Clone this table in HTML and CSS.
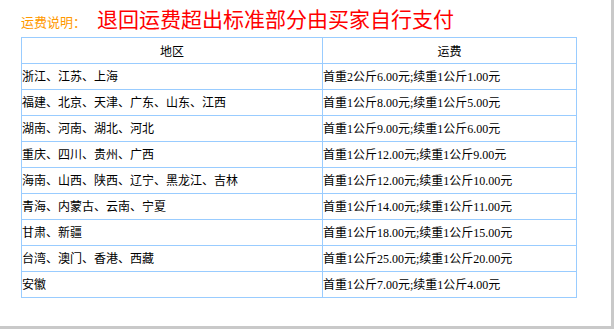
FILE: index.html
```html
<!DOCTYPE html>
<html lang="zh-CN">
<head>
<meta charset="utf-8">
<title>运费说明</title>
<link rel="stylesheet" href="styles.css">
</head>
<body>
<div class="page">
  <div class="title">
    <span class="label">运费说明：</span>
    <span class="notice">退回运费超出标准部分由买家自行支付</span>
  </div>
  <table class="fees">
    <thead>
      <tr><th class="col-area">地区</th><th class="col-fee">运费</th></tr>
    </thead>
    <tbody>
      <tr><td>浙江、江苏、上海</td><td>首重2公斤6.00元;续重1公斤1.00元</td></tr>
      <tr><td>福建、北京、天津、广东、山东、江西</td><td>首重1公斤8.00元;续重1公斤5.00元</td></tr>
      <tr><td>湖南、河南、湖北、河北</td><td>首重1公斤9.00元;续重1公斤6.00元</td></tr>
      <tr><td>重庆、四川、贵州、广西</td><td>首重1公斤12.00元;续重1公斤9.00元</td></tr>
      <tr><td>海南、山西、陕西、辽宁、黑龙江、吉林</td><td>首重1公斤12.00元;续重1公斤10.00元</td></tr>
      <tr><td>青海、内蒙古、云南、宁夏</td><td>首重1公斤14.00元;续重1公斤11.00元</td></tr>
      <tr><td>甘肃、新疆</td><td>首重1公斤18.00元;续重1公斤15.00元</td></tr>
      <tr><td>台湾、澳门、香港、西藏</td><td>首重1公斤25.00元;续重1公斤20.00元</td></tr>
      <tr><td>安徽</td><td>首重1公斤7.00元;续重1公斤4.00元</td></tr>
    </tbody>
  </table>
</div>
</body>
</html>
```
FILE: styles.css
```css
html, body {
  margin: 0;
  padding: 0;
}
body {
  background: #c9c9c9;
  width: 614px;
  height: 329px;
  overflow: hidden;
}
.page {
  width: 611px;
  height: 326px;
  background: #ffffff;
  padding-left: 21px;
  box-sizing: border-box;
  font-family: "Liberation Serif", "Noto Sans CJK SC", serif;
}
.title {
  display: flex;
  align-items: baseline;
  padding-top: 8px;
  height: 37px;
  box-sizing: border-box;
  font-family: "Noto Sans CJK SC", sans-serif;
}
.label {
  color: #ff9900;
  font-size: 13px;
  line-height: 21px;
  margin-right: 11px;
}
.notice {
  color: #ff0000;
  font-size: 21px;
  line-height: 21px;
}
.fees {
  border-collapse: collapse;
  font-size: 12px;
  color: #000;
}
.fees th,
.fees td {
  border: 1px solid #99ccff;
  padding: 0;
  height: 25px;
  text-align: left;
  vertical-align: middle;
  line-height: 14px;
  font-weight: normal;
}
.fees th {
  text-align: center;
  font-family: "Noto Sans CJK SC", sans-serif;
}
.col-area {
  width: 300px;
}
.col-fee {
  width: 253px;
}
```
